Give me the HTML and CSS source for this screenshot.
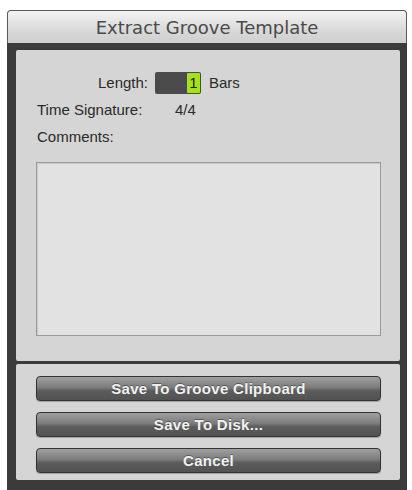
FILE: index.html
```html
<!DOCTYPE html>
<html lang="en">
<head>
  <meta charset="UTF-8">
  <title>Extract Groove Template</title>
  <link rel="stylesheet" href="styles.css">
</head>
<body>

  <div class="window">
    <div class="titlebar">Extract Groove Template</div>

    <div class="frame">
      <div class="panel panel-top">
        <div class="row row-length">
          <span class="label label-right">Length:</span>
          <span class="field"><span class="field-digit">1</span></span>
          <span class="unit">Bars</span>
        </div>
        <div class="row row-sig">
          <span class="label">Time Signature:</span>
          <span class="value">4/4</span>
        </div>
        <div class="row row-comments">
          <span class="label">Comments:</span>
        </div>
        <div class="comments-box"></div>
      </div>

      <div class="panel panel-bottom">
        <button class="btn">Save To Groove Clipboard</button>
        <button class="btn">Save To Disk...</button>
        <button class="btn">Cancel</button>
      </div>
    </div>
  </div>

</body>
</html>
```

FILE: styles.css
```css
body {
  margin: 0;
  background: #ffffff;
  font-family: "Liberation Sans", Arial, sans-serif;
  overflow: hidden;
}

.window {
  width: 400px;
  margin: 10px 0 0 7px;
}

/* Title bar */
.titlebar {
  height: 32px;
  border: 1px solid #5a5a5a;
  border-bottom: none;
  border-radius: 4px 4px 0 0;
  background: linear-gradient(#f4f4f4, #d9d9d9 60%, #cfcfcf);
  box-sizing: content-box;
  width: 398px;
  text-align: center;
  line-height: 33px;
  font-family: "DejaVu Sans", sans-serif;
  font-size: 18px;
  color: #4a4a4a;
}

/* Dark frame */
.frame {
  background: #3b3b3b;
  padding: 7px 7px 10px 9px;
  display: flex;
  flex-direction: column;
  gap: 3px;
}

.panel {
  background: #d5d5d5;
  border-radius: 2px;
}

.panel-top {
  padding: 22px 19px 25px 20px;
  font-size: 15px;
  color: #2a2a2a;
}

.row {
  display: flex;
  align-items: center;
  line-height: 18px;
}

.row-length {
  height: 22px;
}

.row-sig {
  margin-top: 7px;
}

.row-comments {
  margin-top: 9px;
}

.label {
  width: 112px;
  padding-left: 1px;
}

.label-right {
  text-align: right;
  padding-left: 0;
}

.value {
  margin-left: 26px;
}

.field {
  width: 46px;
  height: 22px;
  margin-left: 7px;
  background: #4b4b4b;
  border-radius: 2px;
  display: flex;
  justify-content: flex-end;
  align-items: center;
  padding-right: 1px;
  box-sizing: border-box;
}

.field-digit {
  width: 13px;
  height: 20px;
  background: #a5e21c;
  color: #222;
  font-size: 15px;
  line-height: 20px;
  text-align: center;
  border-radius: 1px;
}

.unit {
  margin-left: 8px;
}

.comments-box {
  margin-top: 16px;
  height: 174px;
  background: #e2e2e2;
  border: 1px solid #9a9a9a;
  box-shadow: inset 1px 1px 1px rgba(0,0,0,0.12);
  box-sizing: border-box;
}

/* Buttons */
.panel-bottom {
  padding: 12px 19px 7px 20px;
  display: flex;
  flex-direction: column;
  gap: 11px;
}

.btn {
  height: 25px;
  border: 1px solid #333;
  border-radius: 4px;
  background: linear-gradient(#a0a0a0, #7c7c7c 45%, #5c5c5c 60%, #525252);
  color: #f2f2f2;
  font-family: "Liberation Sans", Arial, sans-serif;
  font-weight: bold;
  font-size: 15px;
  letter-spacing: 0.3px;
  text-shadow: 0 -1px 0 rgba(0,0,0,0.35);
  padding: 0;
  box-shadow: 0 1px 1px rgba(0,0,0,0.25);
}
```
